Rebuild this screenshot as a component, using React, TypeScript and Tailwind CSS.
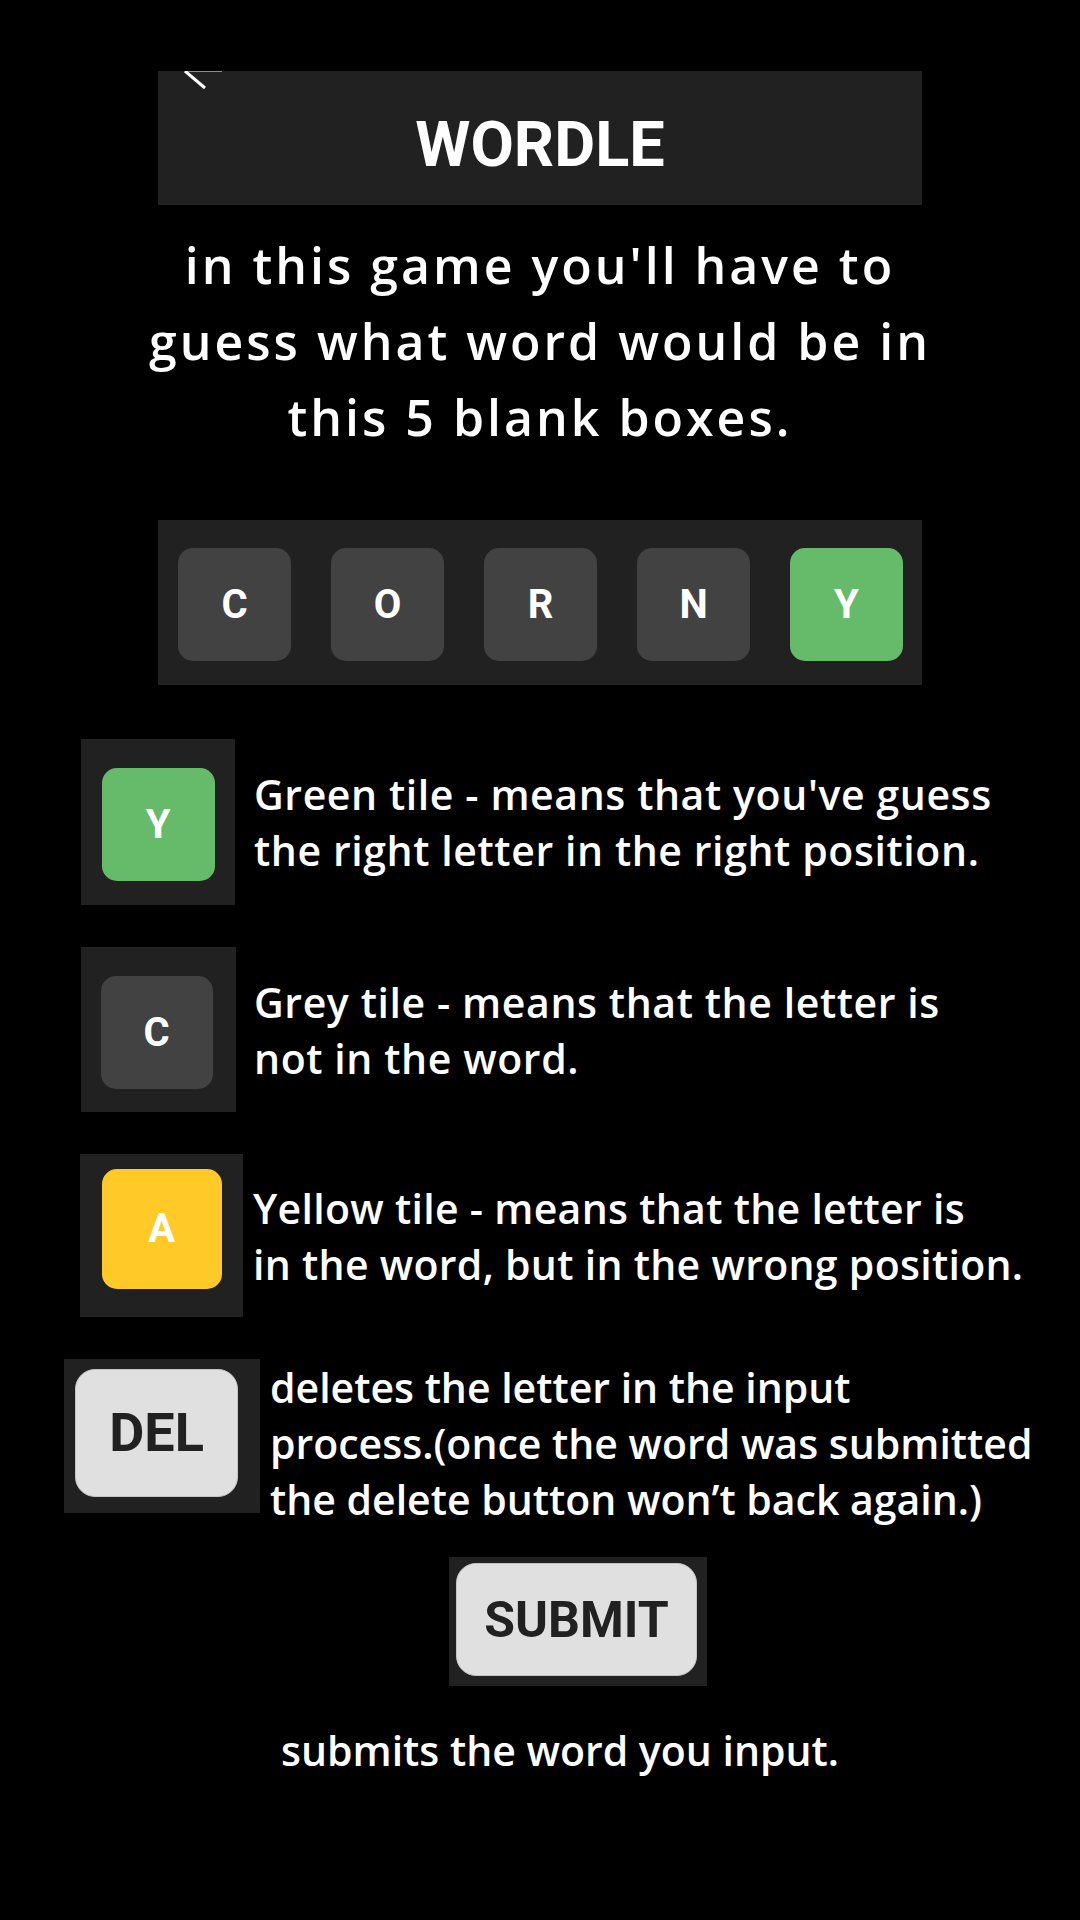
const hand = "font-['Comic_Sans_MS','Open_Sans',sans-serif] font-semibold text-white";
const roboto = "font-['Roboto',sans-serif] font-bold";

function Tile({ letter, className }: { letter: string; className: string }) {
  return (
    <div
      className={`flex items-center justify-center rounded-[15px] text-[40px] leading-none text-white ${roboto} ${className}`}
    >
      {letter}
    </div>
  );
}

export default function App() {
  return (
    <div className="min-h-[1920px] w-[1080px] bg-black pt-[71px]">
      {/* header */}
      <div className="relative ml-[158px] flex h-[134px] w-[764px] items-center justify-center bg-[#212121] pt-[13px]">
        <svg className="absolute left-[26px] top-0" width="42" height="20" viewBox="0 0 42 20">
          <line x1="2" y1="0.5" x2="38" y2="0.5" stroke="#8a8a8a" strokeWidth="1" />
          <line x1="1" y1="0" x2="21" y2="17" stroke="#fff" strokeWidth="3" />
        </svg>
        <span className={`${roboto} text-[63px] leading-none text-white`}>WORDLE</span>
      </div>

      <p className={`${hand} mt-[22px] text-center text-[50px] leading-[76px] tracking-[3px]`}>
        in this game you'll have to
        <br />
        guess what word would be in
        <br />
        this 5 blank boxes.
      </p>

      {/* example word */}
      <div className="ml-[158px] mt-[65px] flex h-[165px] w-[764px] gap-[40px] bg-[#212121] pl-[20px] pt-[28px]">
        {["C", "O", "R", "N"].map((l) => (
          <Tile key={l} letter={l} className="h-[113px] w-[113px] bg-[#424242]" />
        ))}
        <Tile letter="Y" className="h-[113px] w-[113px] bg-[#66bb6a]" />
      </div>

      {/* legend */}
      <div className={`${hand} mt-[54px] flex flex-col gap-[42px] text-[41px] leading-[56px] tracking-[0.6px]`}>
        <div className="flex items-center">
          <div className="ml-[81px] h-[166px] w-[154px] shrink-0 bg-[#212121] pl-[21px] pt-[29px]">
            <Tile letter="Y" className="h-[113px] w-[113px] bg-[#66bb6a]" />
          </div>
          <p className="ml-[19px] whitespace-nowrap">
            Green tile - means that you've guess
            <br />
            the right letter in the right position.
          </p>
        </div>

        <div className="flex items-center">
          <div className="ml-[81px] h-[165px] w-[155px] shrink-0 bg-[#212121] pl-[20px] pt-[29px]">
            <Tile letter="C" className="h-[113px] w-[112px] bg-[#424242]" />
          </div>
          <p className="ml-[18px] whitespace-nowrap">
            Grey tile - means that the letter is
            <br />
            not in the word.
          </p>
        </div>

        <div className="flex items-center">
          <div className="ml-[80px] h-[163px] w-[163px] shrink-0 bg-[#212121] pl-[22px] pt-[15px]">
            <Tile letter="A" className="h-[120px] w-[120px] bg-[#ffca28]" />
          </div>
          <p className="ml-[10px] whitespace-nowrap tracking-[0.3px]">
            Yellow tile - means that the letter is
            <br />
            in the word, but in the wrong position.
          </p>
        </div>

        <div className="flex items-start">
          <div className="ml-[64px] h-[154px] w-[196px] shrink-0 bg-[#212121] pl-[11px] pt-[10px]">
            <div
              className={`${roboto} flex h-[128px] w-[163px] items-center justify-center rounded-[20px] border border-[#c4c4c4] bg-[#e0e0e0] text-[54px] leading-none tracking-normal text-[#212121]`}
            >
              DEL
            </div>
          </div>
          <p className="ml-[10px] whitespace-nowrap tracking-normal">
            deletes the letter in the input
            <br />
            process.(once the word was submitted
            <br />
            the delete button won’t back again.)
          </p>
        </div>
      </div>

      <div className="ml-[449px] mt-[30px] h-[129px] w-[258px] bg-[#212121] pl-[7px] pt-[6px]">
        <div
          className={`${roboto} flex h-[113px] w-[241px] items-center justify-center rounded-[20px] border border-[#c4c4c4] bg-[#e0e0e0] text-[50px] leading-none text-[#212121]`}
        >
          SUBMIT
        </div>
      </div>

      <p className={`${hand} mt-[36px] pl-[40px] text-center text-[41px] leading-[56px]`}>
        submits the word you input.
      </p>
    </div>
  );
}
